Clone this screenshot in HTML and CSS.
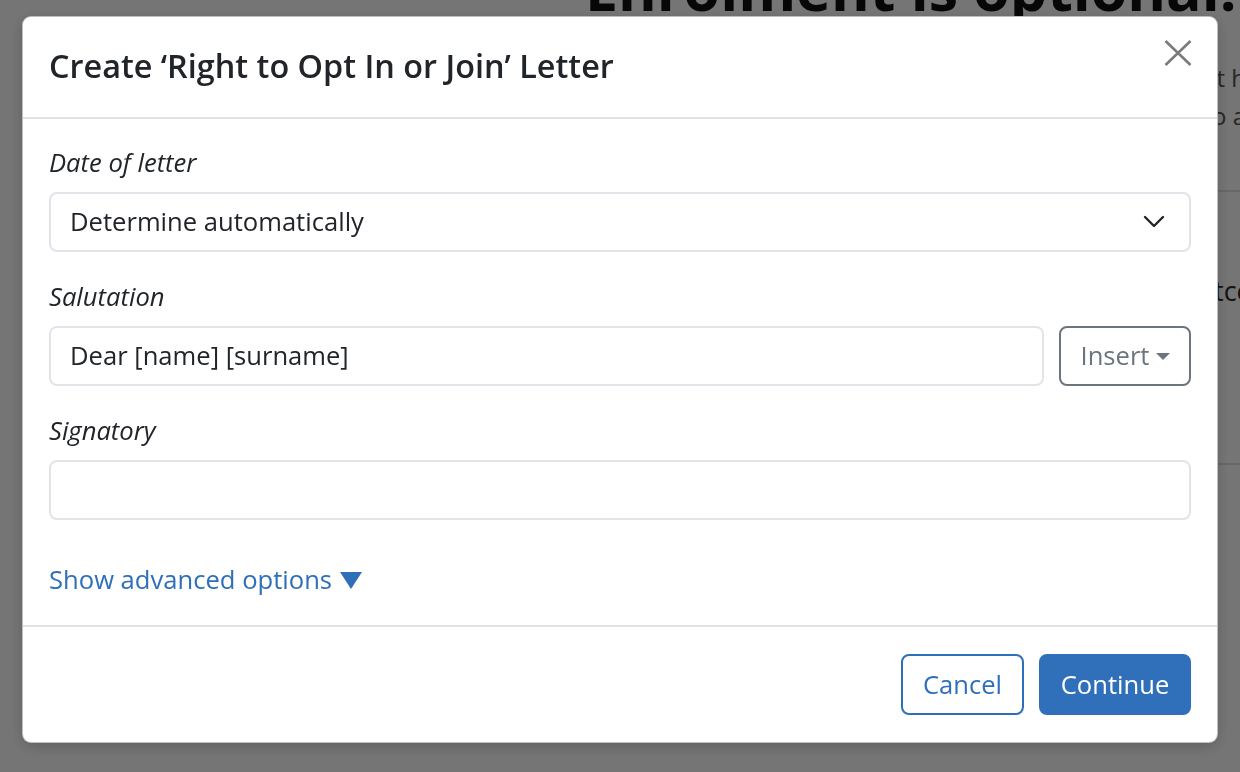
FILE: index.html
```html
<!DOCTYPE html>
<html lang="en">
<head>
<meta charset="utf-8">
<title>Create letter</title>
<link rel="stylesheet" href="styles.css">
</head>
<body>
  <div class="page">
    <h1 class="page-title">Enrolment is optional.</h1>
    <div class="page-intro">
      <p class="intro-line">This worker is not eligible, but they still have the right to ask that h</p>
      <p class="intro-line">to opt in to the pension scheme or to a</p>
    </div>
    <div class="page-panel">
      <p class="panel-line">Send the letter to the worker and record the outcome</p>
    </div>
  </div>

  <div class="backdrop">
    <div class="modal" role="dialog" aria-labelledby="modal-title">
      <header class="modal-header">
        <h2 class="modal-title" id="modal-title">Create ‘Right to Opt In or Join’ Letter</h2>
        <button class="close-btn" type="button" aria-label="Close">
          <svg viewBox="0 0 28 26" width="28" height="26" aria-hidden="true">
            <path d="M1.5 1 L26.5 25 M26.5 1 L1.5 25" stroke="currentColor" stroke-width="2.6" fill="none"/>
          </svg>
        </button>
      </header>

      <div class="modal-body">
        <div class="field">
          <label class="field-label" for="date">Date of letter</label>
          <div class="select">
            <span class="select-value" id="date">Determine automatically</span>
            <svg class="chevron" viewBox="0 0 22 14" width="22" height="14" aria-hidden="true">
              <path d="M2 2 L11 11 L20 2" stroke="currentColor" stroke-width="2.4" fill="none" stroke-linecap="round" stroke-linejoin="round"/>
            </svg>
          </div>
        </div>

        <div class="field">
          <label class="field-label" for="salutation">Salutation</label>
          <div class="input-row">
            <div class="input" id="salutation">Dear [name] [surname]</div>
            <button class="insert-btn" type="button">Insert <span class="caret"></span></button>
          </div>
        </div>

        <div class="field">
          <label class="field-label" for="signatory">Signatory</label>
          <div class="input" id="signatory"></div>
        </div>

        <a class="advanced-link" href="#">Show advanced options <span class="tri"></span></a>
      </div>

      <footer class="modal-footer">
        <button class="btn btn-outline" type="button">Cancel</button>
        <button class="btn btn-primary" type="button">Continue</button>
      </footer>
    </div>
  </div>
</body>
</html>
```

FILE: styles.css
```css
* {
  box-sizing: border-box;
}

html, body {
  margin: 0;
  height: 100%;
}

body {
  background: #ffffff;
  font-family: "Open Sans", "Noto Sans", "Liberation Sans", sans-serif;
  color: #212529;
  overflow: hidden;
}

/* page behind the dialog */
.page {
  padding-left: 585px;
  width: 1400px;
}

.page-title {
  margin: -44px 0 0;
  font-size: 59px;
  font-weight: 700;
  line-height: 1.1;
  color: #111111;
  white-space: nowrap;
}

.page-intro {
  display: flex;
  flex-direction: column;
  align-items: flex-end;
  margin-right: 154px;
  margin-top: 38px;
}

.intro-line {
  margin: 0;
  font-size: 24px;
  line-height: 38px;
  color: #555555;
  white-space: nowrap;
}

.page-panel {
  margin-top: 55px;
  border-top: 2px solid #dee2e6;
  border-bottom: 2px solid #dee2e6;
  height: 275px;
  display: flex;
  flex-direction: column;
  align-items: flex-end;
  padding-top: 80px;
}

.panel-line {
  margin: 0 107px 0 0;
  font-size: 27px;
  color: #2a2a2a;
  white-space: nowrap;
}

/* dimmed backdrop and dialog */
.backdrop {
  position: fixed;
  inset: 0;
  background: rgba(0, 0, 0, 0.54);
  padding: 16px 22px;
}

.modal {
  background: #ffffff;
  border: 1px solid rgba(0, 0, 0, 0.25);
  border-radius: 9px;
  box-shadow: 0 4px 14px rgba(0, 0, 0, 0.18);
  width: 1196px;
  display: flex;
  flex-direction: column;
}

.modal-header {
  display: flex;
  align-items: center;
  justify-content: space-between;
  padding: 0 25px 0 26px;
  height: 102px;
  border-bottom: 2px solid #dee2e6;
}

.modal-title {
  margin: -3px 0 0;
  font-size: 32.4px;
  font-weight: 600;
  line-height: 1.2;
  color: #212529;
}

.close-btn {
  border: 0;
  background: none;
  padding: 0;
  color: #7a7a7a;
  display: flex;
  margin-top: -28px;
}

.modal-body {
  padding: 26px 26px 27px;
  display: flex;
  flex-direction: column;
}

.field {
  display: flex;
  flex-direction: column;
  gap: 11px;
  margin-bottom: 27px;
}

.field-label {
  font-size: 25.6px;
  font-style: italic;
  line-height: 36px;
  color: #212529;
}

.select,
.input {
  height: 60px;
  border: 2px solid #e1e4e8;
  border-radius: 8px;
  font-size: 25.6px;
  line-height: 1.5;
  color: #212529;
  display: flex;
  align-items: center;
  padding: 0 19px;
}

.select {
  justify-content: space-between;
  padding-right: 24px;
}

.chevron {
  color: #212529;
}

.input-row {
  display: flex;
  gap: 15px;
}

.input-row .input {
  flex: 1;
}

.insert-btn {
  width: 132px;
  height: 60px;
  border: 2px solid #6c757d;
  border-radius: 8px;
  background: #ffffff;
  color: #6c757d;
  font-family: inherit;
  font-size: 25.6px;
  display: flex;
  align-items: center;
  justify-content: center;
  gap: 6px;
  padding: 0 0 2px;
}

.caret {
  width: 0;
  height: 0;
  border-left: 7px solid transparent;
  border-right: 7px solid transparent;
  border-top: 7px solid #6c757d;
  margin-top: 2px;
}

.advanced-link {
  margin-top: 15px;
  font-size: 25.6px;
  line-height: 36px;
  color: #2f6fba;
  text-decoration: none;
  align-self: flex-start;
  display: flex;
  align-items: center;
  gap: 8px;
}

.tri {
  width: 0;
  height: 0;
  border-left: 11px solid transparent;
  border-right: 11px solid transparent;
  border-top: 17px solid #2f6fba;
  margin-top: 1px;
}

.modal-footer {
  border-top: 2px solid #dee2e6;
  display: flex;
  justify-content: flex-end;
  gap: 15px;
  padding: 27px 26px 27px;
}

.btn {
  height: 61px;
  border-radius: 8px;
  font-family: inherit;
  font-size: 25.6px;
  padding: 0 20px;
  display: flex;
  align-items: center;
  justify-content: center;
}

.btn-outline {
  width: 123px;
  background: #ffffff;
  border: 2px solid #2f6fba;
  color: #2f6fba;
}

.btn-primary {
  width: 152px;
  background: #3070ba;
  border: 2px solid #3070ba;
  color: #ffffff;
}
```
